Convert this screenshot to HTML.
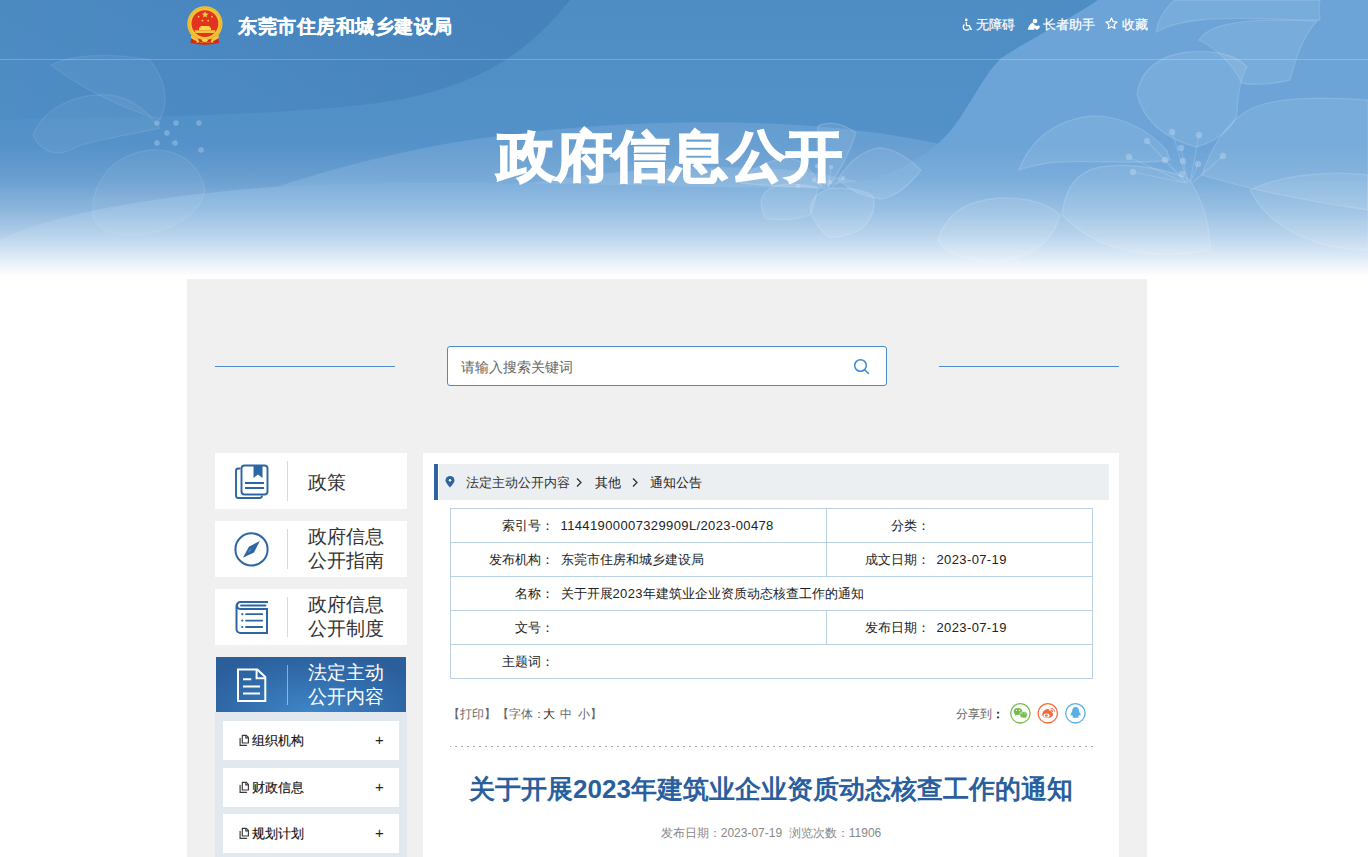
<!DOCTYPE html>
<html><head><meta charset="utf-8">
<style>
*{margin:0;padding:0;box-sizing:border-box}
html,body{width:1368px;height:857px;overflow:hidden;background:#fff;font-family:"Liberation Sans",sans-serif;color:#333}
#banner{position:absolute;left:0;top:0;width:1368px;height:280px;overflow:hidden;
 background:#fff}
#banner svg{position:absolute;left:0;top:0}
.hline{position:absolute;left:0;top:59px;width:1368px;height:1px;background:rgba(255,255,255,0.22)}
.site{position:absolute;left:238px;-webkit-text-stroke:0.25px #fff;top:14px;letter-spacing:0.5px;font-size:19px;font-weight:bold;color:#fff;white-space:nowrap;line-height:26px}
.tools{position:absolute;top:15px;font-size:13px;color:#fff;white-space:nowrap;line-height:19px;-webkit-text-stroke:0.2px #fff}
.bigt{position:absolute;left:497px;top:117px;font-size:57px;font-weight:bold;color:#fff;white-space:nowrap;line-height:80px;-webkit-text-stroke:1.6px #fff;transform:scale(1.012,0.966);transform-origin:0 10px}
#main{position:absolute;left:187px;top:279px;width:960px;height:578px;background:#f0f0f0}
.sline{position:absolute;top:366px;height:1px;background:#4f8fcb;width:180px}
.search{position:absolute;left:447px;top:346px;width:440px;height:40px;border:1px solid #4a8cca;border-radius:3px;background:#fff}
.search span{position:absolute;left:13px;top:10px;font-size:14px;color:#666;line-height:20px}
.search svg{position:absolute;left:405px;top:11px}
.nav{position:absolute;left:215px;width:192px;height:56px;background:#fff}
.nav svg{position:absolute;left:0;top:0}
.nav .sep{position:absolute;left:72px;top:8px;width:1px;height:40px;background:#d9d9d9}
.nav .tx{position:absolute;left:93px;font-size:19px;color:#333;line-height:24px;white-space:nowrap}
.nav.on{left:216px;width:190px;height:55px;background:radial-gradient(ellipse 120px 60px at 50% 100%,#3f86c8 0%,#336fae 55%,#2b5f9c 100%)}
.nav.on .sep{left:71px;background:rgba(255,255,255,0.45)}
.nav.on .tx{left:92px;color:#fff}
#sub{position:absolute;left:215px;top:712px;width:192px;height:145px;background:#e1e9ef}
.si{position:absolute;left:8px;width:176px;height:39px;background:#fff}
.si svg{position:absolute;left:16px;top:14px}
.si .t{position:absolute;left:29px;top:11px;font-size:13px;color:#111;line-height:17px;-webkit-text-stroke:0.15px #111}
.si .p{position:absolute;left:152px;top:9px;font-size:15px;color:#222;line-height:20px}
#content{position:absolute;left:423px;top:453px;width:696px;height:404px;background:#fff}
.crumb{position:absolute;left:11px;top:11px;width:675px;height:36px;background:linear-gradient(to right,#2e649f 0 4px,#fff 4px 5px,#eceff2 5px)}
.crumb .bl{position:absolute;left:0;top:0;width:4px;height:36px;background:#2e649f}
.crumb svg{position:absolute;left:11px;top:12px}
.crumb .c{position:absolute;top:10px;font-size:13px;color:#222;line-height:17px;white-space:nowrap}
table{position:absolute;left:27px;top:55px;width:643px;border-collapse:collapse;font-size:13px;color:#222}
td{border:1px solid #b9d0e6;height:34px;padding:0;line-height:17px;white-space:nowrap}
td.l{text-align:right;padding-right:0;border-right:none}
td.v{padding-left:7px;border-left:none}
.num{letter-spacing:0.38px}
.tool{position:absolute;font-size:12px;color:#666;line-height:16px;white-space:nowrap}
.dots{position:absolute;left:27px;top:293px;width:643px;height:1px;background-image:linear-gradient(to right,#a6a6a6 0 2px,transparent 2px 6px);background-size:6px 1px;background-position:5px 0}
.atitle{position:absolute;left:0;top:316px;width:696px;text-align:center;font-size:26px;font-weight:bold;color:#2a5f9e;line-height:40px;white-space:nowrap}
.ainfo{position:absolute;left:0;top:372px;width:696px;text-align:center;font-size:12px;color:#888;line-height:16px;white-space:nowrap}
</style></head><body>
<div id="banner">
 <svg width="1368" height="280" viewBox="0 0 1368 280">
  <defs>
   <linearGradient id="vg" x1="0" y1="0" x2="0" y2="1">
    <stop offset="0" stop-color="#fff" stop-opacity="0"/>
    <stop offset="0.52" stop-color="#fff" stop-opacity="0"/>
    <stop offset="0.64" stop-color="#fff" stop-opacity="0.1"/>
    <stop offset="0.75" stop-color="#fff" stop-opacity="0.3"/>
    <stop offset="0.84" stop-color="#fff" stop-opacity="0.52"/>
    <stop offset="0.91" stop-color="#fff" stop-opacity="0.75"/>
    <stop offset="0.96" stop-color="#fff" stop-opacity="0.92"/>
    <stop offset="0.99" stop-color="#fff" stop-opacity="1"/>
   </linearGradient>
   <linearGradient id="dg" x1="0" y1="0" x2="1" y2="0"><stop offset="0" stop-color="#2f6aa8" stop-opacity="0.08"/><stop offset="0.6" stop-color="#2f6aa8" stop-opacity="0.22"/><stop offset="0.9" stop-color="#2f6aa8" stop-opacity="0.3"/></linearGradient>
   <linearGradient id="wg" x1="0" y1="0" x2="0" y2="1"><stop offset="0" stop-color="#4e8cc4"/><stop offset="0.5" stop-color="#5290c8"/><stop offset="1" stop-color="#6099cf"/></linearGradient>
   <clipPath id="wc"><path d="M0,0 H1098 C1060,25 1020,45 1000,59 C985,75 975,95 965,110 C950,135 935,150 900,168 C880,178 860,184 800,187 C700,190 500,178 300,185 C150,195 50,215 0,240 Z"/></clipPath>
   <linearGradient id="hg" x1="0" y1="0" x2="1" y2="0">
    <stop offset="0" stop-color="#4f8cc5"/>
    <stop offset="0.4" stop-color="#4e8cc4"/>
    <stop offset="0.75" stop-color="#5692c9"/>
    <stop offset="1" stop-color="#6aa2d6"/>
   </linearGradient>
  </defs>
  <rect width="1368" height="280" fill="#6ca4d7"/>
  <path d="M0,0 H1098 C1060,25 1020,45 1000,59 C985,75 975,95 965,110 C950,135 935,150 900,168 C880,178 860,184 800,187 C700,190 500,178 300,185 C150,195 50,215 0,240 Z" fill="url(#wg)"/>
  <path d="M0,0 H570 C530,50 480,90 370,104 C250,118 120,116 0,120 Z" fill="url(#dg)"/>
  <g clip-path="url(#wc)"><path d="M80,280 C170,220 300,170 450,143 C560,125 680,118 800,125 C900,132 1000,150 1100,200 L1100,280 Z" fill="#a8cbee" opacity="0.22"/>
  <path d="M270,280 C350,230 420,200 520,185 C600,172 680,165 760,168 C850,172 950,200 1100,260 L1100,280 Z" fill="#c0dbf4" opacity="0.2"/></g>
  <g fill="#d6e8fa" fill-opacity="0.12" stroke="#d6e8fa" stroke-opacity="0.2" stroke-width="1.3">
   <path d="M1156,32 C1158,20 1165,8 1175,0 L1320,0 C1318,8 1320,15 1320,20 C1280,20 1230,16 1200,20 C1180,22 1165,27 1156,32 Z"/>
   <path d="M1199,40 C1210,22 1250,18 1317,21 C1300,40 1296,60 1290,80 C1270,85 1250,85 1242,83 C1230,60 1215,48 1199,40 Z"/>
   <path d="M1137,94 C1140,70 1160,55 1188,52 C1210,50 1235,53 1247,67 C1240,78 1238,95 1237,113 C1235,128 1215,142 1196,147 C1170,140 1145,125 1137,94 Z"/>
   <path d="M1019,170 C1030,140 1055,120 1090,116 C1120,115 1150,130 1167,151 L1170,160 C1140,165 1100,160 1060,162 C1040,163 1025,168 1019,170 Z"/>
   <path d="M1202,175 C1210,150 1225,125 1245,112 C1265,100 1300,95 1368,100 L1368,210 C1300,200 1250,190 1202,175 Z"/>
   <path d="M1062,215 C1065,190 1075,172 1100,167 C1130,162 1160,168 1188,178 C1200,195 1210,220 1210,250 C1160,260 1100,255 1062,215 Z"/>
   <path d="M938,240 C945,215 965,200 1000,198 C1030,197 1050,205 1060,215 C1055,235 1040,255 1000,262 C970,262 945,255 938,240 Z"/>
   <path d="M1250,190 C1280,175 1330,170 1368,175 L1368,250 C1320,250 1270,230 1250,190 Z"/>
   <path d="M818,126 C825,122 840,121 856,133 C852,145 845,165 828,187 C820,170 815,145 818,126 Z"/>
   <path d="M921,170 C905,155 890,148 879,148 C865,150 850,160 838,179 C850,190 862,197 882,199 C900,195 912,182 921,170 Z"/>
   <path d="M740,183 C750,170 765,160 789,158 C800,159 812,170 822,187 C800,188 770,186 740,183 Z"/>
   <path d="M761,201 C765,188 775,184 790,184 C805,185 815,186 818,188 C815,200 812,210 810,215 C790,222 770,220 765,218 C762,212 761,206 761,201 Z"/>
   <path d="M810,208 C812,195 825,188 838,188 C855,188 870,192 874,198 C875,210 872,220 860,230 C848,236 835,238 828,237 C818,228 812,218 810,208 Z"/>
   <path opacity="0.55" d="M33,135 C45,105 80,93 110,95 C135,98 150,115 160,128 C130,135 90,140 70,150 C55,158 40,150 33,135 Z"/>
   <path opacity="0.55" d="M93,217 C90,185 110,155 150,150 C180,148 200,165 205,190 C200,215 170,232 140,235 C115,237 97,230 93,217 Z"/>
   <path opacity="0.55" d="M51,65 C70,55 110,52 150,60 C165,80 170,100 160,120 C130,110 90,95 51,65 Z"/>
  </g>
  <g stroke="#d6e8fa" stroke-opacity="0.2" stroke-width="1.2" fill="none">
   <path d="M1172,132 L1188,183 M1199,135 L1190,183 M1147,141 L1186,183 M1181,148 L1188,183 M1129,157 L1185,183 M1165,160 L1187,183 M1198,164 L1190,183 M1223,156 L1192,183 M1133,172 L1185,183"/>
   <path d="M817,166 L826,189 M831,167 L828,189 M814,180 L826,189 M830,182 L828,189 M843,178 L830,189 M798,186 L826,189"/>
  </g>
  <g fill="#d6e8fa" fill-opacity="0.3">
   <circle cx="1172" cy="132" r="3.2"/><circle cx="1199" cy="135" r="3.2"/><circle cx="1147" cy="141" r="3.2"/><circle cx="1181" cy="148" r="3.2"/><circle cx="1129" cy="157" r="3.2"/><circle cx="1165" cy="160" r="3.2"/><circle cx="1183" cy="161" r="3.2"/><circle cx="1198" cy="164" r="3.2"/><circle cx="1223" cy="156" r="3.2"/><circle cx="1133" cy="172" r="3.2"/><circle cx="1182" cy="174" r="3.2"/>
   <circle cx="817" cy="166" r="2.2"/><circle cx="831" cy="167" r="2.2"/><circle cx="814" cy="180" r="2.2"/><circle cx="830" cy="182" r="2.2"/><circle cx="843" cy="178" r="2.2"/><circle cx="798" cy="186" r="2.2"/><circle cx="805" cy="170" r="2.2"/>
   <circle cx="157" cy="123" r="2.8"/><circle cx="176" cy="123" r="2.8"/><circle cx="167" cy="133" r="2.8"/><circle cx="199" cy="123" r="2.8"/><circle cx="175" cy="143" r="2.8"/><circle cx="157" cy="143" r="2.8"/><circle cx="201" cy="150" r="2.8"/>
  </g>
  <rect width="1368" height="280" fill="url(#vg)"/>
 </svg>
 <div class="hline"></div>
</div>
<!-- emblem -->
<svg style="position:absolute;left:185px;top:4px" width="40" height="42" viewBox="185 4 40 42">
 <path d="M192,33 L190.5,43 Q204.8,46.5 219,43 L217.5,33 Z" fill="#d9261c"/>
 <circle cx="204.9" cy="23.8" r="17.6" fill="#f3c53a"/>
 <circle cx="204.9" cy="23.8" r="16.2" fill="none" stroke="#e8ac1e" stroke-width="0.8"/>
 <circle cx="204.9" cy="23.6" r="13.4" fill="#e3321f"/>
 <path d="M205.1,11.2 l0.9,2.4 2.5,0.1 -2,1.5 0.7,2.4 -2.1,-1.4 -2.1,1.4 0.7,-2.4 -2,-1.5 2.5,-0.1z" fill="#f8d448"/>
 <circle cx="198.6" cy="16.7" r="0.9" fill="#f8d448"/><circle cx="212" cy="16.7" r="0.9" fill="#f8d448"/>
 <circle cx="202.5" cy="20.6" r="0.9" fill="#f8d448"/><circle cx="208.2" cy="20.6" r="0.9" fill="#f8d448"/>
 <path d="M200.5,26 h9 v1.5 h1.5 v2.8 h-12 v-2.8 h1.5z" fill="#f8d448"/>
 <path d="M194.5,30.3 h21 l-1,2.6 h-19z" fill="#f3c53a"/>
 <path d="M191,35 Q204.9,46 218.7,35 L218.7,38 Q204.9,48 191,38z" fill="#f3c53a"/>
 <path d="M198,38.5 Q204.9,42 211.8,38.5 L211,41.5 Q204.9,44 198.8,41.5z" fill="#d9261c"/>
 <ellipse cx="204.8" cy="40.3" rx="3" ry="1.6" fill="#f8d448"/>
 <path d="M196,42.5 l2,-3 1,3z M213.8,42.5 l-2,-3 -1,3z" fill="#f8d448"/>
</svg>
<div class="site">东莞市住房和城乡建设局</div>
<svg style="position:absolute;left:961px;top:18px" width="12" height="13" viewBox="0 0 12 13"><circle cx="5.3" cy="1.9" r="1.3" fill="#fff"/><path d="M5.2,4 L5.6,7.6 H8.3 L9.8,11.2 H11" stroke="#fff" stroke-width="1.4" fill="none" stroke-linejoin="round"/><path d="M3.4,6.4 A3.3,3.3 0 1 0 8.4,10.6" stroke="#fff" stroke-width="1.3" fill="none"/></svg>
<div class="tools" style="left:976px">无障碍</div>
<svg style="position:absolute;left:1027px;top:18px" width="14" height="13" viewBox="0 0 14 13"><circle cx="8" cy="3" r="2.3" fill="#fff"/><path d="M5.5,4.5 C3,6 1,9 0.8,11.8 H7.5 C7.5,9 8.5,7 7,6 Z" fill="#fff"/><path d="M10,8.3 c0.9,-1.4 3,-0.9 2.8,0.6 c-0.1,1 -1.4,2 -2.8,3 c-1.4,-1 -2.7,-2 -2.8,-3 c-0.2,-1.5 1.9,-2 2.8,-0.6z" fill="#fff"/></svg>
<div class="tools" style="left:1043px">长者助手</div>
<svg style="position:absolute;left:1105px;top:17px" width="13" height="13" viewBox="0 0 13 13"><path d="M6.5,1 L8.1,4.6 L12,5 L9.1,7.6 L9.9,11.5 L6.5,9.5 L3.1,11.5 L3.9,7.6 L1,5 L4.9,4.6Z" stroke="#fff" stroke-width="1.2" fill="none" stroke-linejoin="round"/></svg>
<div class="tools" style="left:1122px">收藏</div>
<div class="bigt">政府信息公开</div>

<div id="main"></div>
<div class="sline" style="left:215px"></div>
<div class="sline" style="left:939px"></div>
<div class="search"><span>请输入搜索关键词</span>
 <svg width="18" height="18" viewBox="0 0 18 18"><circle cx="7.5" cy="7.5" r="5.8" stroke="#3a8bd3" stroke-width="1.5" fill="none"/><path d="M11.6,11.8 L15.5,15.5" stroke="#3a8bd3" stroke-width="1.5" stroke-linecap="round"/></svg>
</div>

<div class="nav" style="top:453px">
 <svg style="left:1px" width="72" height="56" viewBox="0 0 72 56">
  <path d="M24.5,15.5 h-2 a2.5,2.5 0 0 0 -2.5,2.5 v24.5 a2.5,2.5 0 0 0 2.5,2.5 h21 a2.5,2.5 0 0 0 2.5,-2.5" stroke="#2c66a3" stroke-width="1.9" fill="none"/>
  <rect x="25.5" y="12.5" width="26" height="29" rx="3" stroke="#2c66a3" stroke-width="1.9" fill="#fff"/>
  <path d="M37.5,12 h9 v13 l-4.5,-3.6 l-4.5,3.6z" fill="#2c66a3"/>
  <path d="M29,30 h19 M29,35 h19" stroke="#2c66a3" stroke-width="1.8"/>
 </svg>
 <div class="sep"></div><div class="tx" style="top:18px">政策</div></div>
<div class="nav" style="top:521px">
 <svg width="72" height="56" viewBox="0 0 72 56">
  <circle cx="36.5" cy="28.4" r="16.1" stroke="#2c66a3" stroke-width="2" fill="none"/>
  <path d="M44.8,19.9 L39,31.6 L27.9,36.8 L33.9,25.8 Z" fill="#2c66a3"/>
  <path d="M34.6,29.6 L36.8,27.6 L32.4,32.4Z" fill="#fff"/>
 </svg>
 <div class="sep"></div><div class="tx" style="top:4px">政府信息<br>公开指南</div></div>
<div class="nav" style="top:589px">
 <svg width="72" height="56" viewBox="0 0 72 56">
  <path d="M53,13 H25.5 a4,4 0 0 0 -4,4 V40 a4,4 0 0 0 4,4 H52 V20 H25.5 a3.5,3.5 0 0 1 0,-7" stroke="#2c66a3" stroke-width="2" fill="none"/>
  <path d="M26,16.5 H50.5" stroke="#2c66a3" stroke-width="1.8" stroke-linecap="round"/>
  <path d="M31,25.2 H47.2 M31,31.6 H47.2 M31,38 H47.2" stroke="#2c66a3" stroke-width="1.8" stroke-linecap="round"/>
  <circle cx="27.3" cy="25.2" r="1.1" fill="#2c66a3"/><circle cx="27.3" cy="31.6" r="1.1" fill="#2c66a3"/><circle cx="27.3" cy="38" r="1.1" fill="#2c66a3"/>
 </svg>
 <div class="sep"></div><div class="tx" style="top:4px">政府信息<br>公开制度</div></div>
<div class="nav on" style="top:657px">
 <svg width="72" height="55" viewBox="0 0 72 55">
  <path d="M22,12.5 H41.3 L49.3,20 V44 H22 Z" stroke="#fff" stroke-width="2" fill="none"/>
  <path d="M40.6,12.5 V21.2 H49.3" stroke="#fff" stroke-width="2" fill="none"/>
  <path d="M27,22.3 H35.3 M27,29.5 H44 M27,36.5 H44" stroke="#fff" stroke-width="2"/>
 </svg>
 <div class="sep"></div><div class="tx" style="top:4px">法定主动<br>公开内容</div></div>
<div id="sub">
 <div class="si" style="top:9px"><svg style="left:13px;top:9px" width="16" height="20" viewBox="236 730 16 20"><path d="M242.3,735.3 H246.3 L248.4,737.4 V743 H242.3 Z" stroke="#3a3a3a" stroke-width="1.15" fill="none" stroke-linejoin="round"/><path d="M245.8,735.3 V737.9 H248.4" stroke="#3a3a3a" stroke-width="1.1" fill="none"/><path d="M240.1,738.2 V745.3 H246.6" stroke="#3a3a3a" stroke-width="1.15" fill="none" stroke-linecap="round"/></svg><div class="t">组织机构</div><div class="p">+</div></div>
 <div class="si" style="top:56px"><svg style="left:13px;top:9px" width="16" height="20" viewBox="236 730 16 20"><path d="M242.3,735.3 H246.3 L248.4,737.4 V743 H242.3 Z" stroke="#3a3a3a" stroke-width="1.15" fill="none" stroke-linejoin="round"/><path d="M245.8,735.3 V737.9 H248.4" stroke="#3a3a3a" stroke-width="1.1" fill="none"/><path d="M240.1,738.2 V745.3 H246.6" stroke="#3a3a3a" stroke-width="1.15" fill="none" stroke-linecap="round"/></svg><div class="t">财政信息</div><div class="p">+</div></div>
 <div class="si" style="top:102px"><svg style="left:13px;top:9px" width="16" height="20" viewBox="236 730 16 20"><path d="M242.3,735.3 H246.3 L248.4,737.4 V743 H242.3 Z" stroke="#3a3a3a" stroke-width="1.15" fill="none" stroke-linejoin="round"/><path d="M245.8,735.3 V737.9 H248.4" stroke="#3a3a3a" stroke-width="1.1" fill="none"/><path d="M240.1,738.2 V745.3 H246.6" stroke="#3a3a3a" stroke-width="1.15" fill="none" stroke-linecap="round"/></svg><div class="t">规划计划</div><div class="p">+</div></div>
</div>

<div id="content">
 <div class="crumb"><div class="bl"></div>
  <svg width="10" height="12" viewBox="0 0 10 12"><path d="M5,11.5 C2,8 0.5,6 0.5,4.5 A4.5,4.5 0 0 1 9.5,4.5 C9.5,6 8,8 5,11.5Z" fill="#2e649f"/><circle cx="5" cy="4.2" r="1.2" fill="#fff"/></svg>
  <div class="c" style="left:32px;color:#333">法定主动公开内容</div>
  <svg style="left:141px;top:13px" width="8" height="11" viewBox="0 0 8 11"><path d="M2,1.5 L6,5.5 L2,9.5" stroke="#333" stroke-width="1.3" fill="none"/></svg>
  <div class="c" style="left:161px">其他</div>
  <svg style="left:197px;top:13px" width="8" height="11" viewBox="0 0 8 11"><path d="M2,1.5 L6,5.5 L2,9.5" stroke="#333" stroke-width="1.3" fill="none"/></svg>
  <div class="c" style="left:216px">通知公告</div>
 </div>
 <table>
  <tr><td class="l" style="width:103px">索引号：</td><td class="v" style="width:273px"><span class="num">11441900007329909L/2023-00478</span></td><td class="l" style="width:103px">分类：</td><td class="v"></td></tr>
  <tr><td class="l">发布机构：</td><td class="v">东莞市住房和城乡建设局</td><td class="l">成文日期：</td><td class="v"><span class="num">2023-07-19</span></td></tr>
  <tr><td class="l">名称：</td><td class="v" colspan="3">关于开展<span class="num">2023</span>年建筑业企业资质动态核查工作的通知</td></tr>
  <tr><td class="l">文号：</td><td class="v"></td><td class="l">发布日期：</td><td class="v"><span class="num">2023-07-19</span></td></tr>
  <tr><td class="l">主题词：</td><td class="v" colspan="3"></td></tr>
 </table>
 <div class="tool" style="left:25px;top:253px">【打印】</div>
 <div class="tool" style="left:74px;top:253px">【字体：</div>
 <div class="tool" style="left:120px;top:253px;color:#222">大</div>
 <div class="tool" style="left:137px;top:253px">中</div>
 <div class="tool" style="left:155px;top:253px">小</div>
 <div class="tool" style="left:167px;top:253px">】</div>
 <div class="tool" style="left:533px;top:253px">分享到<span style="color:#000;-webkit-text-stroke:0.3px #000">：</span></div>
 <svg style="position:absolute;left:583px;top:247px" width="86" height="28" viewBox="1006 700 86 28">
  <circle cx="1020.4" cy="713.3" r="9.7" stroke="#76bd4f" stroke-width="1.3" fill="#fff"/>
  <ellipse cx="1018" cy="711.4" rx="4.3" ry="3.5" fill="#76bd4f"/><path d="M1015.5,713.5 l-0.6,2.2 2.4,-1.3z" fill="#76bd4f"/>
  <ellipse cx="1023.6" cy="714.8" rx="3.9" ry="3.2" fill="#76bd4f" stroke="#fff" stroke-width="0.6"/><path d="M1025.5,717 l0.8,1.6 -2.2,-0.9z" fill="#76bd4f"/>
  <circle cx="1016.6" cy="710.4" r="0.55" fill="#fff"/><circle cx="1019.6" cy="710.4" r="0.55" fill="#fff"/>
  <circle cx="1022.2" cy="713.8" r="0.5" fill="#fff"/><circle cx="1025" cy="713.8" r="0.5" fill="#fff"/>
  <circle cx="1047.8" cy="713.3" r="9.7" stroke="#f7683a" stroke-width="1.3" fill="#fff"/>
  <path d="M1042.5,715.8 C1041.5,712.5 1044.5,709.5 1047.5,709 C1049.2,708.8 1049.8,709.8 1049.5,710.8 C1051,710.3 1052.3,711 1051.8,712.5 C1053.3,713 1053.5,714.5 1052.5,716 C1051,718.2 1044.5,719 1042.5,715.8Z" fill="#f7683a"/>
  <ellipse cx="1046.5" cy="715.4" rx="3" ry="2" fill="#fff"/><ellipse cx="1046.3" cy="715.6" rx="1.6" ry="1.1" fill="#f7683a"/>
  <path d="M1050.5,708.3 A3.5,3.5 0 0 1 1054.5,711.8 M1050.6,710 A1.8,1.8 0 0 1 1052.6,712" stroke="#f7683a" stroke-width="0.9" fill="none"/>
  <circle cx="1075.4" cy="713.3" r="9.7" stroke="#58b0e4" stroke-width="1.3" fill="#fff"/>
  <path d="M1075.6,707 c-2.4,0 -3.4,1.9 -3.4,3.8 v0.6 c-0.9,1.2 -1.9,2.8 -1.7,4 c0.3,0.5 1,0 1.5,-0.7 c0.3,0.9 0.7,1.6 1.2,2.1 c-0.9,0.3 -1,0.9 0.1,1 h4.6 c1.1,-0.1 1,-0.7 0.1,-1 c0.5,-0.5 0.9,-1.2 1.2,-2.1 c0.5,0.7 1.2,1.2 1.5,0.7 c0.2,-1.2 -0.8,-2.8 -1.7,-4 v-0.6 c0,-1.9 -1,-3.8 -3.4,-3.8z" fill="#58b0e4"/>
 </svg>
 <div class="dots"></div>
 <div class="atitle">关于开展2023年建筑业企业资质动态核查工作的通知</div>
 <div class="ainfo">发布日期：2023-07-19&nbsp; 浏览次数：11906</div>
</div>
</body></html>
